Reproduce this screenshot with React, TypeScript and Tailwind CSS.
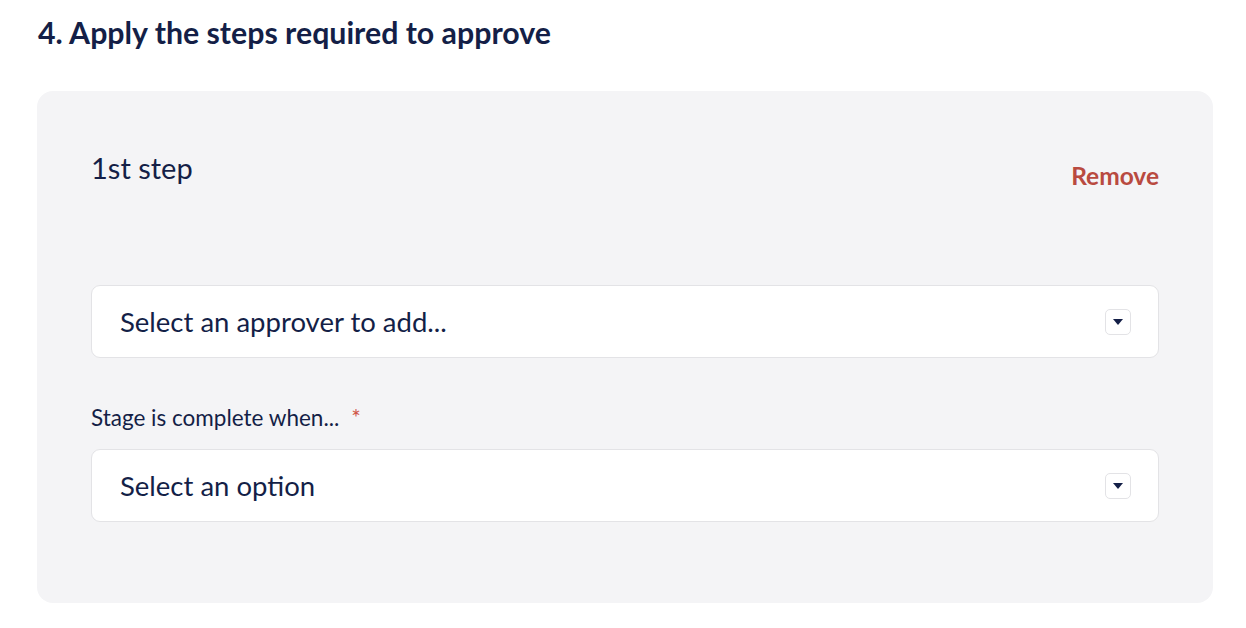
import React from "react";

function Chevron() {
  return (
    <div className="flex h-[26px] w-[26px] items-center justify-center rounded-[5px] border border-[#e3e3e6] bg-white">
      <svg width="10" height="6" viewBox="0 0 10 6">
        <path d="M0 0 H10 L5 6 Z" fill="#141f47" />
      </svg>
    </div>
  );
}

function Select({ label }: { label: string }) {
  return (
    <div className="flex h-[73px] items-center justify-between rounded-[9px] border border-[#e3e3e6] bg-white pl-[28px] pr-[27px]">
      <span className="text-[27.5px] leading-8 text-[#141f47]">{label}</span>
      <Chevron />
    </div>
  );
}

export default function App() {
  return (
    <div
      className="min-h-[628px] w-[1246px] bg-white pt-[14px]"
      style={{ fontFamily: "Lato, 'Noto Sans', sans-serif" }}
    >
      <h1 className="ml-[38px] text-[30.3px] font-bold leading-9 text-[#141f47]">
        4. Apply the steps required to approve
      </h1>
      <div className="ml-[37px] mt-[41px] w-[1176px] rounded-[16px] bg-[#f4f4f6] px-[54px] pb-[81px] pt-[61px]">
        <div className="flex items-start justify-between">
          <span className="text-[29px] leading-8 text-[#141f47]">1st step</span>
          <span className="mt-[10px] text-[24.5px] font-bold leading-7 text-[#b94a40]">Remove</span>
        </div>
        <div className="mt-[95px]">
          <Select label="Select an approver to add..." />
        </div>
        <div className="mt-[47px] text-[22.5px] leading-[26px] text-[#141f47]">
          Stage is complete when...<span className="ml-[12px] text-[#d0574a]">*</span>
        </div>
        <div className="mt-[18px]">
          <Select label="Select an option" />
        </div>
      </div>
    </div>
  );
}
